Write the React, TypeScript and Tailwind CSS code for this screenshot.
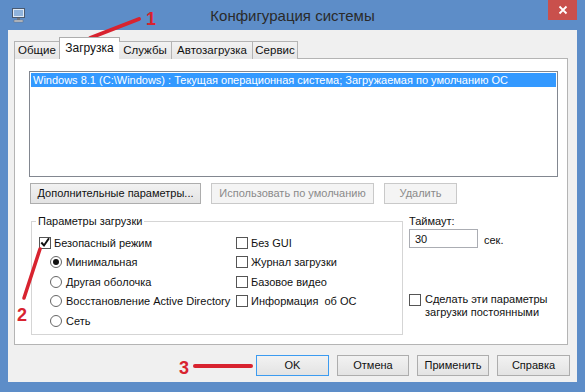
import React from 'react';

const font = "font-['Liberation_Sans','DejaVu_Sans',sans-serif]";

function WinButton({ label, width, disabled, primary }: { label: string; width: string; disabled?: boolean; primary?: boolean }) {
  const base = 'h-[21px] flex items-center justify-center text-[11px] border whitespace-nowrap';
  const look = disabled
    ? 'border-[#c9c9c9] bg-[#f4f4f4] text-[#8a8a8a]'
    : primary
      ? 'border-[#3c9bf0] bg-gradient-to-b from-[#f2f2f2] to-[#e3e3e3] text-[#111]'
      : 'border-[#adadad] bg-gradient-to-b from-[#f2f2f2] to-[#e3e3e3] text-[#111]';
  return <div className={`${base} ${look} ${width}`}>{label}</div>;
}

function CheckBox({ checked }: { checked?: boolean }) {
  return (
    <span className="w-[12px] h-[12px] border border-[#555] bg-white flex items-center justify-center shrink-0">
      {checked && (
        <svg width="11" height="11" viewBox="0 0 10 10" className="-mt-[1px]">
          <path d="M1.3 5 L4 8 L9 0.8" fill="none" stroke="#111" strokeWidth="2" />
        </svg>
      )}
    </span>
  );
}

function Radio({ checked }: { checked?: boolean }) {
  return (
    <span className="w-[12px] h-[12px] rounded-full border border-[#666] bg-white flex items-center justify-center shrink-0">
      {checked && <span className="w-[6px] h-[6px] rounded-full bg-[#111]" />}
    </span>
  );
}

function Row({ children, indent }: { children: React.ReactNode; indent?: boolean }) {
  return <div className={`h-[19.5px] flex items-center whitespace-nowrap ${indent ? 'pl-[11px]' : ''}`}>{children}</div>;
}

export default function App() {
  const tabs = ['Общие', 'Загрузка', 'Службы', 'Автозагрузка', 'Сервис'];
  const tabWidths = ['w-[46px]', 'w-[61px]', 'w-[53px]', 'w-[81px]', 'w-[45px]'];

  return (
    <div className={`relative w-[585px] h-[392px] bg-[#5d8dc8] overflow-hidden text-[#111] ${font}`}>
      {/* Title bar */}
      <div className="relative h-[30px] flex items-center">
        <svg className="absolute left-[11px] top-[7px]" width="16" height="16" viewBox="0 0 16 16">
          <rect x="1.5" y="1.5" width="12" height="9" fill="#dfe9f5" stroke="#4a5a70" />
          <rect x="3" y="3" width="9" height="6" fill="#8fb3dc" />
          <rect x="6" y="11" width="3" height="2" fill="#6b7480" />
          <rect x="3" y="13" width="9" height="2" fill="#c8ccd2" stroke="#6b7480" strokeWidth="0.6" />
        </svg>
        <div className="flex-1 text-center text-[15px] text-[#2a2a2a] pt-[2px]">Конфигурация системы</div>
        <div className="absolute right-[8px] top-0 w-[29px] h-[20px] bg-[#c9504c] flex items-center justify-center">
          <svg width="10" height="10" viewBox="0 0 10 10">
            <path d="M1.5 1.5 L8.5 8.5 M8.5 1.5 L1.5 8.5" stroke="#fff" strokeWidth="1.8" />
          </svg>
        </div>
      </div>

      {/* Client area */}
      <div className="ml-[8px] w-[569px] h-[352px] bg-[#f0f0f0] pl-[6px] pt-[7px]">
        {/* Tabs */}
        <div className="flex items-end h-[22px] relative z-10">
          {tabs.map((t, i) =>
            i === 1 ? (
              <div
                key={t}
                className={`${tabWidths[i]} h-[22px] bg-white border border-[#adadad] border-b-0 flex items-center justify-center text-[12px] -mx-[1px] pb-[2px]`}
              >
                {t}
              </div>
            ) : (
              <div
                key={t}
                className={`${tabWidths[i]} h-[18px] bg-gradient-to-b from-[#f2f2f2] to-[#e6e6e6] border border-[#b4b4b4] border-b-0 ${i > 0 ? 'border-l-0' : ''} flex items-center justify-center text-[11.5px]`}
              >
                {t}
              </div>
            )
          )}
        </div>

        {/* Panel */}
        <div className="w-[554px] h-[287px] -mt-[1px] bg-white border border-[#b4b4b4] pl-[14px] pt-[12px]">
          <div className="w-[529px] h-[106px] border border-[#828790] bg-white p-[1px]">
            <div className="h-[14px] bg-[#3399ff] text-white text-[11px] leading-[14px] pl-[2px] whitespace-nowrap">
              Windows 8.1 (C:\Windows) : Текущая операционная система; Загружаемая по умолчанию ОС
            </div>
          </div>

          <div className="flex mt-[6px] ml-[1px] gap-[10px]">
            <WinButton label="Дополнительные параметры..." width="w-[171px]" />
            <WinButton label="Использовать по умолчанию" width="w-[163px]" disabled />
            <WinButton label="Удалить" width="w-[73px]" disabled />
          </div>

          <div className="flex mt-[10px]">
            <fieldset className="ml-[2px] w-[372px] h-[121px] border border-[#d5d5d5] pl-[7px] text-[11px]">
              <legend className="-ml-[3px] px-[2px] text-[11px] leading-[14px]">Параметры загрузки</legend>
              <div className="flex pt-[5px]">
                <div className="w-[197px]">
                  <Row>
                    <CheckBox checked />
                    <span className="ml-[3px]">Безопасный режим</span>
                  </Row>
                  <Row indent>
                    <Radio checked />
                    <span className="ml-[4px]">Минимальная</span>
                  </Row>
                  <Row indent>
                    <Radio />
                    <span className="ml-[4px]">Другая оболочка</span>
                  </Row>
                  <Row indent>
                    <Radio />
                    <span className="ml-[4px]">Восстановление Active Directory</span>
                  </Row>
                  <Row indent>
                    <Radio />
                    <span className="ml-[4px]">Сеть</span>
                  </Row>
                </div>
                <div>
                  {['Без GUI', 'Журнал загрузки', 'Базовое видео', 'Информация  об ОС'].map((s) => (
                    <Row key={s}>
                      <CheckBox />
                      <span className="ml-[3px] whitespace-pre">{s}</span>
                    </Row>
                  ))}
                </div>
              </div>
            </fieldset>

            <div className="ml-[6px] text-[11px]">
              <div className="leading-[14px]">Таймаут:</div>
              <div className="flex items-center mt-[1px]">
                <div className="w-[69px] h-[19px] border border-[#abadb3] bg-white flex items-center pl-[5px]">30</div>
                <span className="ml-[6px] mt-[3px]">сек.</span>
              </div>
              <div className="flex mt-[45px]">
                <CheckBox />
                <div className="ml-[4px] leading-[13px] -mt-[1px]">
                  Сделать эти параметры
                  <br />
                  загрузки постоянными
                </div>
              </div>
            </div>
          </div>
        </div>

        {/* Dialog buttons */}
        <div className="flex justify-end gap-[8px] pr-[7px] mt-[10px]">
          <WinButton label="OK" width="w-[73px]" primary />
          <WinButton label="Отмена" width="w-[72px]" />
          <WinButton label="Применить" width="w-[72px]" />
          <WinButton label="Справка" width="w-[73px]" />
        </div>
      </div>

      {/* Red annotations */}
      <svg className="absolute inset-0 pointer-events-none" width="585" height="392" viewBox="0 0 585 392">
        <line x1="90" y1="38" x2="139" y2="19" stroke="#d8232f" strokeWidth="4" strokeLinecap="round" />
        <line x1="40" y1="249" x2="24" y2="298" stroke="#d8232f" strokeWidth="3.5" strokeLinecap="round" />
        <line x1="195" y1="366" x2="251" y2="366" stroke="#d8232f" strokeWidth="4" strokeLinecap="round" />
      </svg>
      <span className="absolute left-[146px] top-[6px] text-[18px] font-bold text-[#d8232f] font-['Liberation_Sans',sans-serif]">1</span>
      <span className="absolute left-[17px] top-[302px] text-[18px] font-bold text-[#d8232f] font-['Liberation_Sans',sans-serif]">2</span>
      <span className="absolute left-[179px] top-[355px] text-[18px] font-bold text-[#d8232f] font-['Liberation_Sans',sans-serif]">3</span>
    </div>
  );
}
